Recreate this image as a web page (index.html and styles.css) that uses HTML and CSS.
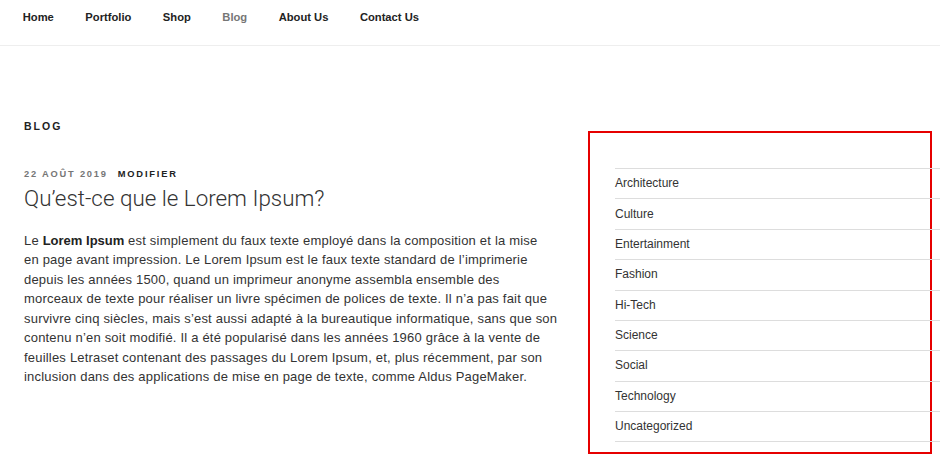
FILE: index.html
```html
<!DOCTYPE html>
<html lang="fr">
<head>
<meta charset="utf-8">
<title>Blog</title>
<link rel="stylesheet" href="styles.css">
</head>
<body>
<header class="site-nav">
  <ul class="menu">
    <li><a href="#">Home</a></li>
    <li><a href="#">Portfolio</a></li>
    <li><a href="#">Shop</a></li>
    <li class="current"><a href="#">Blog</a></li>
    <li><a href="#">About Us</a></li>
    <li><a href="#">Contact Us</a></li>
  </ul>
</header>
<div class="content">
  <main class="primary">
    <h1 class="page-title">Blog</h1>
    <article class="post">
      <div class="entry-meta"><span class="posted-on">22 août 2019</span><a class="edit-link" href="#">Modifier</a></div>
      <h2 class="entry-title">Qu’est-ce que le Lorem Ipsum?</h2>
      <p class="entry-content">Le <strong>Lorem Ipsum</strong> est simplement du faux texte employé dans la composition et la mise<br>
en page avant impression. Le Lorem Ipsum est le faux texte standard de l’imprimerie<br>
depuis les années 1500, quand un imprimeur anonyme assembla ensemble des<br>
morceaux de texte pour réaliser un livre spécimen de polices de texte. Il n’a pas fait que<br>
survivre cinq siècles, mais s’est aussi adapté à la bureautique informatique, sans que son<br>
contenu n’en soit modifié. Il a été popularisé dans les années 1960 grâce à la vente de<br>
feuilles Letraset contenant des passages du Lorem Ipsum, et, plus récemment, par son<br>
inclusion dans des applications de mise en page de texte, comme Aldus PageMaker.</p>
    </article>
  </main>
  <aside class="sidebar">
    <ul class="cat-list">
      <li><a href="#">Architecture</a></li>
      <li><a href="#">Culture</a></li>
      <li><a href="#">Entertainment</a></li>
      <li><a href="#">Fashion</a></li>
      <li><a href="#">Hi-Tech</a></li>
      <li><a href="#">Science</a></li>
      <li><a href="#">Social</a></li>
      <li><a href="#">Technology</a></li>
      <li><a href="#">Uncategorized</a></li>
    </ul>
  </aside>
</div>
</body>
</html>
```
FILE: styles.css
```css
html, body {
  margin: 0;
  padding: 0;
  overflow: hidden;
  background: #fff;
}
body {
  font-family: "Liberation Sans", Arial, sans-serif;
  color: #333;
}
a {
  color: inherit;
  text-decoration: none;
}
.site-nav {
  height: 45px;
  border-bottom: 1px solid #eee;
}
.menu {
  list-style: none;
  margin: 0;
  padding: 0 0 0 7px;
  display: flex;
}
.menu li a {
  display: block;
  padding: 0 15.75px;
  line-height: 34px;
  font-size: 11.2px;
  font-weight: 700;
  color: #222;
}
.menu li.current a {
  color: #767676;
}
.content {
  display: flex;
  align-items: flex-start;
  padding: 72px 0 0 24px;
}
.primary {
  width: 534px;
  flex: none;
}
.page-title {
  margin: 0;
  font-size: 10.5px;
  line-height: 16px;
  font-weight: 700;
  letter-spacing: 2px;
  text-transform: uppercase;
  color: #222;
}
.entry-meta {
  margin-top: 33px;
  font-size: 9.3px;
  line-height: 14px;
  font-weight: 700;
  letter-spacing: 1.8px;
  text-transform: uppercase;
  color: #767676;
}
.edit-link {
  margin-left: 10px;
  color: #222;
}
.entry-title {
  margin: 4px 0 0;
  font-family: Roboto, "Liberation Sans", sans-serif;
  font-weight: 300;
  font-size: 22.4px;
  line-height: 26px;
  color: #333;
}
.entry-content {
  margin: 19.5px 0 0;
  font-size: 13px;
  letter-spacing: 0.2px;
  line-height: 19.5px;
  color: #333;
  white-space: nowrap;
}
.entry-content strong {
  color: #222;
  letter-spacing: 0;
}
.sidebar {
  flex: none;
  margin: 13px 0 0 30px;
  border: 2px solid #e60000;
  padding: 35px 0 0 25px;
  width: 315px;
  height: 284px;
}
.cat-list {
  list-style: none;
  margin: 0;
  padding: 0;
  width: 340px;
}
.cat-list li {
  border-top: 1px solid #ddd;
  padding: 6.2px 0;
  font-size: 12px;
  line-height: 17px;
  color: #333;
}
.cat-list li:last-child {
  border-bottom: 1px solid #ddd;
}
```
